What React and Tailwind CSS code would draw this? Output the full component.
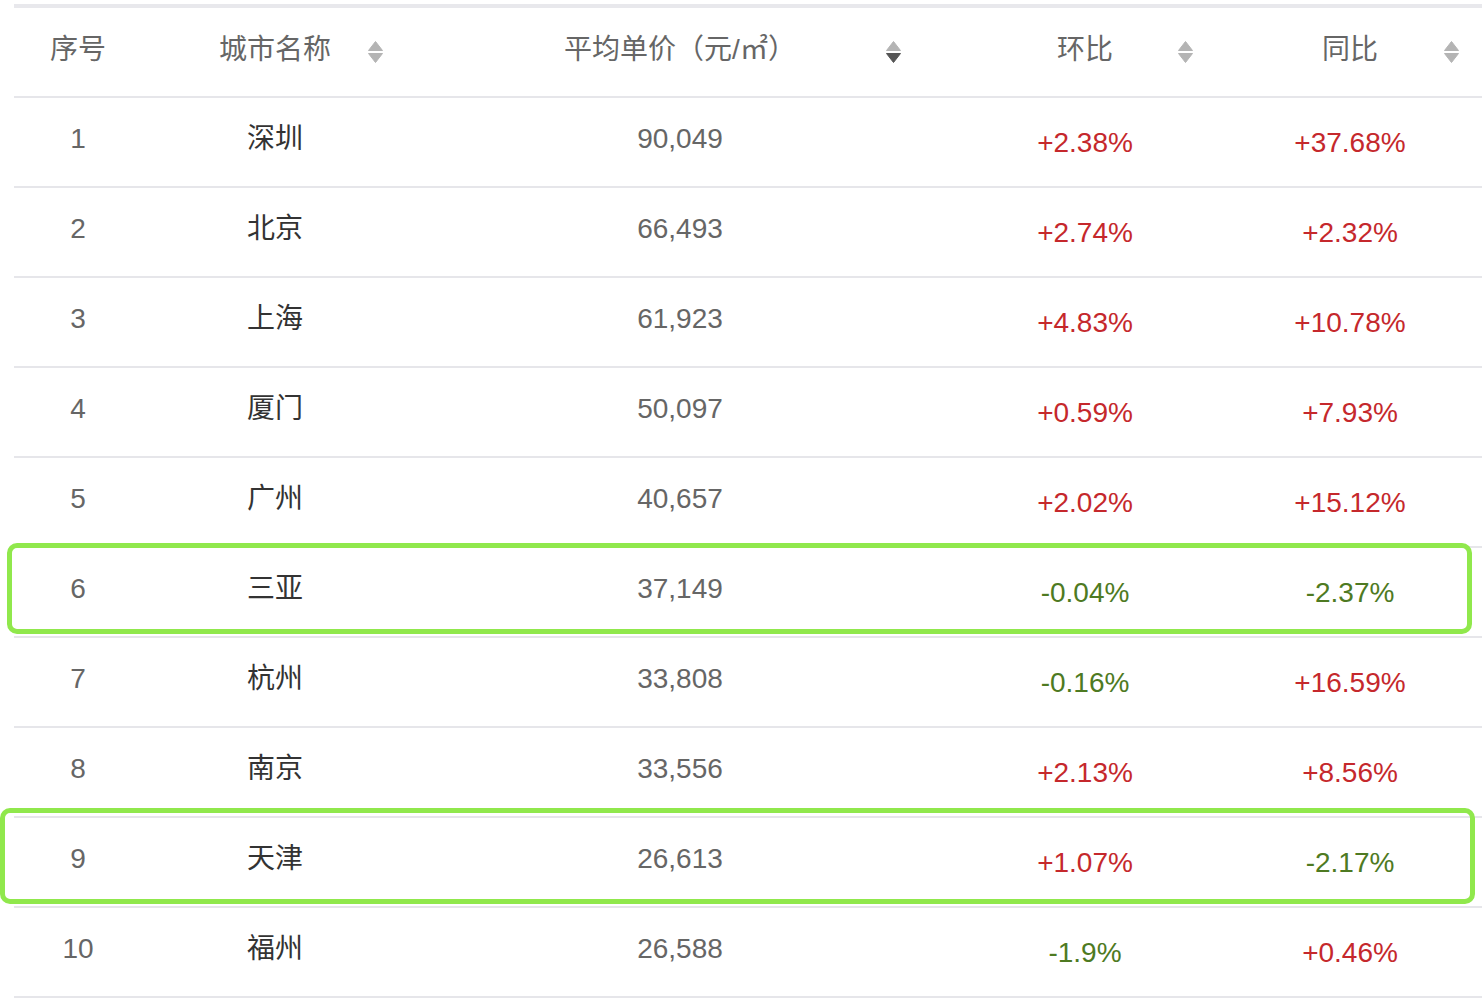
import React from "react";

const rows = [
	{ id: 1, city: "深圳", price: "90,049", mom: "+2.38%", yoy: "+37.68%" },
	{ id: 2, city: "北京", price: "66,493", mom: "+2.74%", yoy: "+2.32%" },
	{ id: 3, city: "上海", price: "61,923", mom: "+4.83%", yoy: "+10.78%" },
	{ id: 4, city: "厦门", price: "50,097", mom: "+0.59%", yoy: "+7.93%" },
	{ id: 5, city: "广州", price: "40,657", mom: "+2.02%", yoy: "+15.12%" },
	{ id: 6, city: "三亚", price: "37,149", mom: "-0.04%", yoy: "-2.37%" },
	{ id: 7, city: "杭州", price: "33,808", mom: "-0.16%", yoy: "+16.59%" },
	{ id: 8, city: "南京", price: "33,556", mom: "+2.13%", yoy: "+8.56%" },
	{ id: 9, city: "天津", price: "26,613", mom: "+1.07%", yoy: "-2.17%" },
	{ id: 10, city: "福州", price: "26,588", mom: "-1.9%", yoy: "+0.46%" },
];

const cols = "grid grid-cols-[128px_266px_544px_266px_1fr]";

const SortIcon = ({ active }) => (
	<svg width="15" height="22" viewBox="0 0 15 22" className="absolute top-1/2 -translate-y-1/2">
		<path d="M7.5 0.5 L14.5 9.5 L0.5 9.5 Z" fill="#b4b4b4" strokeLinejoin="round" stroke="#b4b4b4" strokeWidth="1" />
		<path d="M0.5 12.5 L14.5 12.5 L7.5 21.5 Z" fill={active ? "#555555" : "#b4b4b4"} strokeLinejoin="round" stroke={active ? "#555555" : "#b4b4b4"} strokeWidth="1" />
	</svg>
);

const HeadCell = ({ label, iconRight, active }) => (
	<div className="relative flex items-center justify-center h-full">
		<span className="pb-[4px]">{label}</span>
		{iconRight !== undefined && (
			<span className={`absolute top-0 bottom-0 ${iconRight}`}>
				<SortIcon active={active} />
			</span>
		)}
	</div>
);

const pct = (v) => (v.startsWith("-") ? "text-[#4e7a22]" : "text-[#c5282c]");

const App = () => {
	return (
		<div
			className="relative w-[1482px] h-[1000px] bg-white overflow-hidden"
			style={{ fontFamily: '"Liberation Sans", "Noto Sans CJK SC", sans-serif' }}
		>
			<div className="ml-[14px] pt-[4px] text-[28px]">
				<div className="border-t-4 border-[#e8e8ec]">
					<div className={`${cols} h-[90px] border-b-2 border-[#e6e6ea] text-[#666]`}>
						<HeadCell label="序号" />
						<HeadCell label="城市名称" iconRight="right-[40px]" />
						<HeadCell label="平均单价（元/㎡）" iconRight="right-[66px]" active />
						<HeadCell label="环比" iconRight="right-[40px]" />
						<HeadCell label="同比" iconRight="right-[38px]" />
					</div>
					{rows.map((r) => (
						<div key={r.id} className={`${cols} h-[90px] border-b-2 border-[#e6e6ea]`}>
							<div className="flex items-center justify-center pb-[6px] text-[#666]">{r.id}</div>
							<div className="flex items-center justify-center pb-[6px] text-[#333]">{r.city}</div>
							<div className="flex items-center justify-center pb-[6px] text-[#666]">{r.price}</div>
							<div className={`flex items-center justify-center pt-[2px] ${pct(r.mom)}`}>{r.mom}</div>
							<div className={`flex items-center justify-center pt-[2px] ${pct(r.yoy)}`}>{r.yoy}</div>
						</div>
					))}
				</div>
			</div>

			{/* highlight annotations */}
			<div className="absolute left-[7px] top-[543px] w-[1465px] h-[91px] border-[5px] border-[#90e84c] rounded-[10px]" />
			<div className="absolute left-0 top-[808px] w-[1475px] h-[96px] border-[5px] border-[#90e84c] rounded-[10px]" />
		</div>
	);
};

export default App;
